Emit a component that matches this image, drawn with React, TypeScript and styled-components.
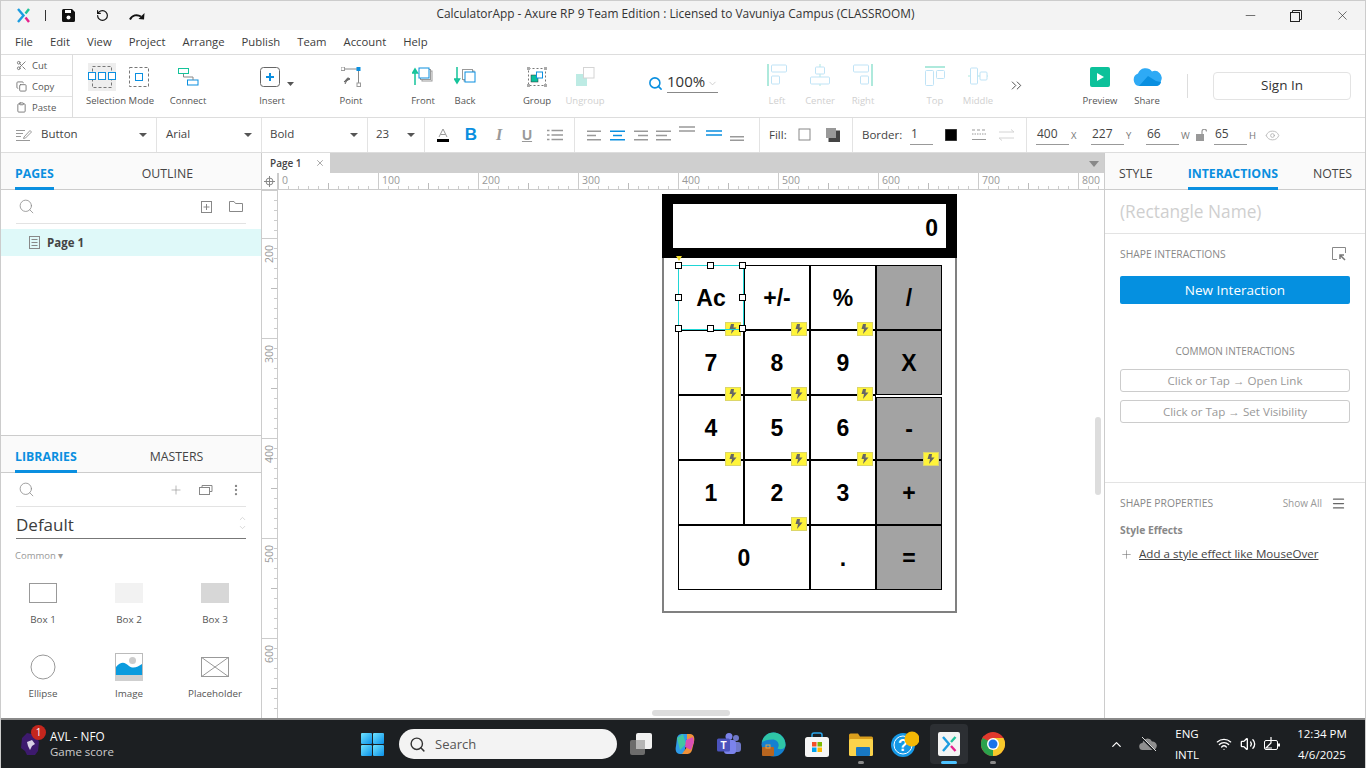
import React from "react";
import styled, { createGlobalStyle } from "styled-components";
import { Scissors, Copy, Clipboard, RotateCcw, Search, Plus, EllipsisVertical, ChevronDown, ChevronUp, ChevronsRight, Eye, Minus, X, Wifi, Volume2, ChevronUp as Up, Menu } from "lucide-react";

const FONT = `"Open Sans", "Liberation Sans", sans-serif`;
const Global = createGlobalStyle`
  html, body { margin: 0; padding: 0; background: #fff; }
  * { box-sizing: border-box; }
  body { font-family: ${FONT}; color: #333; }
`;

const Root = styled.div`
  width: 1366px; height: 768px; overflow: hidden; display: flex; flex-direction: column;
  border-left: 1px solid #ccc; border-right: 1px solid #ccc; border-top: 1px solid #ccc; background: #fff;
`;
/* ---------- title & menu ---------- */
const TitleBar = styled.div`
  height: 29px; flex: none; background: #f3f3f3; display: flex; align-items: center; position: relative; padding-left: 16px;
`;
const TitleText = styled.div`
  position: absolute; left: 0; right: 0; top: 5px; text-align: center; font-size: 11.9px; line-height: 15px; color: #333; padding-right: 15px;
`;
const QuickSlot = styled.div<{ $w: number }>`
  width: ${p => p.$w}px; flex: none; display: flex; justify-content: center; align-items: center;
`;
const WinBtns = styled.div`
  margin-left: auto; display: flex; padding-right: 0; color: #222; align-items: center;
`;
const MenuBar = styled.div`
  height: 25px; flex: none; display: flex; align-items: center; border-bottom: 1px solid #ddd; padding-left: 14px; gap: 17px;
`;
const MenuItem = styled.span`
  font-size: 11.3px; color: #3c3c3c; line-height: 24px;
`;
/* ---------- toolbar ---------- */
const Toolbar = styled.div`
  height: 63px; flex: none; display: flex; align-items: flex-start; border-bottom: 1px solid #ddd;
`;
const ClipCol = styled.div`
  width: 72px; height: 62px; flex: none; border-right: 1px solid #ddd; display: flex; flex-direction: column; margin-right: 7px;
`;
const ClipRow = styled.div`
  flex: 1; display: flex; align-items: center; gap: 5px; padding-left: 15px; font-size: 9.5px; color: #555;
  & + & { border-top: 1px solid #e3e3e3; }
`;
const Tool = styled.div<{ $w: number; $ml?: number }>`
  width: ${p => p.$w}px; margin-left: ${p => p.$ml ?? 0}px; flex: none; display: flex; flex-direction: column; align-items: center; padding-top: 8px;
`;
const ToolIcon = styled.div`
  height: 31px; display: flex; align-items: flex-start; justify-content: center; gap: 13px;
`;
const ToolLabel = styled.div<{ $off?: boolean }>`
  font-size: 9.5px; line-height: 14px; color: ${p => (p.$off ? "#d0d0d0" : "#555")}; white-space: nowrap;
`;
const HiBox = styled.div`
  background: #eee; width: 28px; height: 28px; margin-left: -4px; display: flex; align-items: center; justify-content: center;
`;
const ZoomWrap = styled.div`
  width: 80px; margin-left: 35px; display: flex; align-items: flex-start; padding-top: 18px; padding-left: 3px; flex: none;
`;
const ZoomVal = styled.div`
  width: 51px; margin-left: 4px; height: 20px; border-bottom: 1px solid #888; font-size: 15px; line-height: 16px; color: #333; display: flex; justify-content: space-between;
`;
const SepV = styled.div`
  width: 1px; height: 24px; background: #ddd; margin: 19px 0 0 16px; flex: none;
`;
const SignIn = styled.div`
  width: 138px; height: 28px; margin: 17px 0 0 25px; border: 1px solid #e3e3e3; border-radius: 4px; font-size: 13.5px; line-height: 24px; padding-bottom: 2px; color: #333; display: flex; align-items: center; justify-content: center; flex: none;
`;
/* ---------- format bar ---------- */
const FormatBar = styled.div`
  height: 35px; flex: none; display: flex; border-bottom: 1px solid #ddd;
`;
const FSection = styled.div<{ $w?: number; $pl?: number }>`
  ${p => (p.$w ? `width:${p.$w}px;flex:none;border-right:1px solid #e3e3e3;` : "flex:1;")}
  padding-left: ${p => p.$pl ?? 0}px; display: flex; align-items: center; position: relative;
`;
const FSelectText = styled.span<{ $ml?: number }>`
  font-size: 11.5px; color: #444; margin-left: ${p => p.$ml ?? 0}px; margin-top: -3px;
`;
const Caret = styled.span`
  position: absolute; right: 9px; top: 15px; width: 0; height: 0; border: 4px solid transparent; border-top: 4px solid #555; border-bottom: 0;
`;
const FSlot = styled.div<{ $w: number; $ml?: number }>`
  width: ${p => p.$w}px; margin-left: ${p => p.$ml ?? 0}px; flex: none; display: flex; justify-content: center; align-items: center;
`;
const FLabel = styled.span<{ $w: number }>`
  width: ${p => p.$w}px; flex: none; font-size: 11.5px; color: #444; margin-top: -1px;
`;
const NumInput = styled.div<{ $w?: number; $ml?: number }>`
  width: ${p => p.$w ?? 33}px; margin-left: ${p => p.$ml ?? 0}px; height: 19px; flex: none; border-bottom: 1px solid #999; font-size: 12px; line-height: 16px; color: #444; padding-left: 1px; margin-top: 1px;
`;
const Letter = styled.span<{ $w: number }>`
  width: ${p => p.$w}px; flex: none; font-size: 9.5px; padding-left: 2px; color: #777; margin-top: 1px;
`;
/* ---------- main ---------- */
const Main = styled.div`
  flex: 1; min-height: 0; display: flex;
`;
const SidePanel = styled.div<{ $right?: boolean }>`
  width: 261px; flex: none; display: flex; flex-direction: column;
  ${p => (p.$right ? "border-left:1px solid #ccc;" : "border-right:1px solid #ccc;")}
`;
const TabBar = styled.div<{ $gap: number }>`
  height: 37px; flex: none; display: flex; gap: ${p => p.$gap}px; padding-left: 14px; background: #fafafa; border-bottom: 1px solid #ccc;
`;
const Tab = styled.div<{ $on?: boolean }>`
  height: 37px; padding-top: 13px; font-size: 12.3px; line-height: 15px; white-space: nowrap;
  color: ${p => (p.$on ? "#0a8fe0" : "#444")}; font-weight: ${p => (p.$on ? 700 : 400)};
  border-bottom: 3px solid ${p => (p.$on ? "#0a8fe0" : "transparent")};
`;
const PagesPane = styled.div`
  flex: 1; min-height: 0;
`;
const SearchRow = styled.div`
  height: 34px; margin: 0 15px 0 15px; border-bottom: 1px solid #e3e3e3; display: flex; align-items: center; color: #888; padding-left: 2px;
`;
const SearchActions = styled.div`
  margin-left: auto; margin-right: -5px; display: flex; align-items: center;
`;
const ActionSlot = styled.div`
  width: 30px; display: flex; justify-content: center;
`;
const PageRow = styled.div`
  margin-top: 5px; height: 27px; background: #dff9f9; display: flex; align-items: center; padding-left: 28px; gap: 7px; font-size: 11.5px; font-weight: 700; color: #444;
`;
const LibPane = styled.div`
  height: 283px; flex: none; border-top: 1px solid #ccc;
`;
const DefaultSel = styled.div`
  margin: 0 15px; height: 32px; border-bottom: 1px solid #777; font-size: 17px; line-height: 35px; color: #3c3c3c; display: flex; justify-content: space-between;
`;
const Stack = styled.div`
  display: flex; flex-direction: column; justify-content: center; color: #ccc; margin-right: -1px;
`;
const CommonLabel = styled.div`
  margin: 10px 0 10px 14px; font-size: 9.5px; line-height: 14px; color: #999;
`;
const WidgetGrid = styled.div`
  display: grid; grid-template-columns: repeat(3, 86px); grid-auto-rows: 74px; margin-left: -1px;
`;
const Widget = styled.div`
  display: flex; flex-direction: column; align-items: center;
`;
const WidgetIcon = styled.div`
  height: 40px; display: flex; align-items: center; justify-content: center;
`;
const WidgetLabel = styled.div`
  font-size: 9.8px; line-height: 14px; color: #555;
`;
/* canvas */
const Center = styled.div`
  flex: 1; min-width: 0; display: flex; flex-direction: column;
`;
const DocTabs = styled.div`
  height: 20px; flex: none; background: #cfcfcf; padding-left: 0; display: flex; position: relative;
`;
const DocTab = styled.div`
  width: 68px; background: #fff; font-size: 10px; font-weight: 600; color: #444; padding-left: 8px; padding-bottom: 1px; display: flex; align-items: center; justify-content: space-between; padding-right: 5px;
`;
const DocCaret = styled.span`
  position: absolute; right: 5px; top: 8px; width: 0; height: 0; border: 5px solid transparent; border-top: 6px solid #888; border-bottom: 0;
`;
const RulerRow = styled.div`
  height: 17px; flex: none; display: flex; border-bottom: 1px solid #ccc; overflow: hidden;
`;
const RulerCorner = styled.div`
  width: 16px; flex: none; display: flex; align-items: center; justify-content: center; border-right: 1px solid #ccc; color: #888;
`;
const HCell = styled.div`
  width: 100px; flex: none; border-left: 1px solid #ccc; padding-left: 3px; padding-top: 1px; font-size: 10.5px; line-height: 13px; color: #999;
  background:
    repeating-linear-gradient(to right, #bbb 0 1px, transparent 1px 50px) 49px 100% / 100% 6px no-repeat,
    repeating-linear-gradient(to right, #ccc 0 1px, transparent 1px 10px) 9px 100% / 100% 3px no-repeat;
`;
const CanvasBody = styled.div`
  flex: 1; min-height: 0; display: flex;
`;
const VRuler = styled.div`
  width: 16px; flex: none; border-right: 1px solid #ccc; overflow: hidden; display: flex; flex-direction: column;
`;
const VCell = styled.div<{ $h?: number }>`
  height: ${p => p.$h ?? 100}px; flex: none; border-top: 1px solid #ccc; position: relative;
  background:
    repeating-linear-gradient(to bottom, #bbb 0 1px, transparent 1px 50px) 100% 49px / 6px 100% no-repeat,
    repeating-linear-gradient(to bottom, #ccc 0 1px, transparent 1px 10px) 100% 9px / 3px 100% no-repeat;
`;
const VText = styled.span`
  display: block; writing-mode: vertical-rl; transform: rotate(180deg); font-size: 10.5px; line-height: 12px; color: #999; padding-bottom: 3px; height: 24px; margin-left: 1px; text-align: left;
`;
const Surface = styled.div`
  flex: 1; position: relative; overflow: hidden; background: #fff;
`;
const Calc = styled.div`
  position: absolute; left: 384px; top: 4px; width: 295px; height: 419px; border: 2px solid #808080; background: #fff;
`;
const Display = styled.div`
  margin: -2px -2px 0; height: 64px; background: #000; padding: 10px 11px 10px 11px;
`;
const DisplayInner = styled.div`
  height: 44px; background: #fff; color: #000; font: 700 23px/48px "Liberation Sans", Arial, sans-serif; text-align: right; padding-right: 8px;
`;
const BtnGrid = styled.div`
  margin: 7px 0 0 14px; display: grid; grid-template-columns: repeat(4, 66px); grid-auto-rows: 65px;
`;
const CalcBtn = styled.div<{ $gray?: boolean; $span?: number; $top?: number }>`
  position: relative; border: 1px solid #000; display: flex; align-items: center; justify-content: center;
  font: 700 23px/26px "Liberation Sans", Arial, sans-serif; color: #000;
  ${p => (p.$gray ? "background:#a3a3a3;" : "")}
  ${p => (p.$span ? `grid-column: span ${p.$span};` : "")}
  ${p => (p.$top ? `margin-top:${p.$top}px;` : "")}
`;
const Badge = styled.span`
  position: absolute; right: 2px; bottom: -7px; width: 16px; height: 14px; background: #fff43a; border: 1px solid #dcd66a; z-index: 2; display: flex; align-items: center; justify-content: center;
`;
const Selection = styled.div`
  position: absolute; left: -1px; top: -1px; width: 66px; height: 65px; border: 1px solid #1fd6d6; z-index: 3;
`;
const Handle = styled.span<{ $x: number; $y: number }>`
  position: absolute; width: 7px; height: 7px; background: #fff; border: 1px solid #000; left: calc(${p => p.$x}% - 4px); top: calc(${p => p.$y}% - 4px);
`;
const Marker = styled.span`
  position: absolute; left: -3px; top: -10px; width: 0; height: 0; border: 3px solid transparent; border-top: 5px solid #f3dd2c; border-bottom: 0;
`;
const VScroll = styled.div`
  position: absolute; right: 3px; top: 227px; width: 6px; height: 78px; background: #ddd; border-radius: 3px;
`;
const HScroll = styled.div`
  position: absolute; left: 374px; bottom: 2px; width: 78px; height: 6px; background: #ddd; border-radius: 3px;
`;
/* right panel */
const NameField = styled.div`
  height: 44px; border-bottom: 1px solid #e3e3e3; padding: 10px 0 0 15px; font-size: 17.3px; line-height: 24px; color: #cfcfcf;
`;
const SecHead = styled.div`
  display: flex; justify-content: space-between; align-items: center; padding: 0 19px 0 15px; height: 14px; font-size: 10.3px; line-height: 14px; color: #888; margin-top: 13px;
`;
const PrimaryBtn = styled.div`
  margin: 15px 15px 0; height: 28px; background: #0590e0; border-radius: 2px; color: #fff; font-size: 13.5px; display: flex; align-items: center; justify-content: center;
`;
const CommonHead = styled.div`
  margin-top: 40px; margin-bottom: 11px; text-align: center; font-size: 10px; line-height: 14px; color: #888;
`;
const OutlineBtn = styled.div`
  margin: 0 15px 8px; height: 23px; border: 1px solid #ccc; border-radius: 3px; color: #999; font-size: 11.6px; display: flex; align-items: center; justify-content: center;
`;
const RightSection = styled.div`
  margin-top: 51px; border-top: 1px solid #e3e3e3;
`;
const ShowAll = styled.span`
  display: flex; align-items: center; gap: 9px; font-size: 10px; color: #999;
`;
const SmallBold = styled.div`
  margin: 13px 0 0 15px; font-size: 10.3px; line-height: 14px; font-weight: 700; color: #888;
`;
const AddEffect = styled.div`
  margin: 9px 0 0 15px; display: flex; align-items: center; gap: 6px; font-size: 11.6px; line-height: 16px; color: #444;
  & > span { text-decoration: underline; }
`;
/* taskbar */
const BottomRule = styled.div`
  height: 2px; flex: none; background: #8a8a8a; margin-left: -1px; margin-right: -1px;
`;
const Taskbar = styled.div`
  height: 48px; flex: none; background: #1c1f22; display: flex; align-items: center; margin-left: -1px; margin-right: -1px; padding-left: 20px; color: #fff; position: relative;
`;
const News = styled.div`
  width: 330px; flex: none; display: flex; align-items: center; gap: 10px; position: relative;
`;
const NewsBadge = styled.span`
  position: absolute; left: 11px; top: -3px; width: 15px; height: 15px; border-radius: 50%; background: #c4261d; font-size: 10px; line-height: 15px; text-align: center; color: #fff;
`;
const NewsText = styled.div`
  font-size: 11.8px; line-height: 16px; color: #fff;
  & > small { display: block; font-size: 11.5px; color: #ccc; }
`;
const TaskSlot = styled.div<{ $on?: boolean }>`
  width: 44px; height: 48px; flex: none; display: flex; align-items: center; justify-content: center; position: relative;
  ${p => (p.$on ? "&::before{content:'';position:absolute;left:3px;right:3px;top:4px;bottom:4px;background:#2c2f33;border-radius:4px;}" : "")}
  & > svg { position: relative; }
`;
const RunDot = styled.span<{ $on?: boolean }>`
  position: absolute; bottom: 4px; left: 50%; transform: translateX(-50%); height: 3px; border-radius: 2px;
  width: ${p => (p.$on ? 16 : 6)}px; background: ${p => (p.$on ? "#4cc2ff" : "#8a8a8a")};
`;
const SearchPill = styled.div`
  width: 218px; height: 30px; margin: 0 2px 0 5px; flex: none; background: #f3f3f3; border-radius: 15px; display: flex; align-items: center; gap: 9px; padding-left: 10px; color: #555; font-size: 13px;
`;
const Tray = styled.div`
  margin-left: auto; display: flex; align-items: center; padding-right: 19px;
`;
const TraySlot = styled.div<{ $w: number; $ml?: number }>`
  width: ${p => p.$w}px; margin-left: ${p => p.$ml ?? 0}px; flex: none; display: flex; justify-content: center; align-items: center;
`;
const TrayText = styled.div`
  font-size: 11.5px; line-height: 21px; text-align: center; color: #fff; white-space: nowrap;
`;

/* ---------- drawings ---------- */
const AxureLogo = () => (
  <svg width="13" height="15" viewBox="0 0 13 15" fill="none" strokeWidth="2.4">
    <path d="M1 1 L6.500 7.500 L1 14" stroke="#1c9ce0" />
    <path d="M12 1 L8.500 5.500" stroke="#1fc39a" />
    <path d="M8.500 9.500 L12 14" stroke="#e6218c" />
  </svg>
);
const SaveIcon = () => (
  <svg width="13" height="13" viewBox="0 0 13 13"><path d="M0 1.500A1.500 1.500 0 0 1 1.500 0H10l3 3v8.500a1.500 1.500 0 0 1-1.500 1.500h-10A1.500 1.500 0 0 1 0 11.500Z" fill="#111" /><rect x="3" y="1" width="6" height="3" fill="#fff" /><circle cx="6.500" cy="8.500" r="2" fill="#fff" /></svg>
);
const RedoIcon = () => (
  <svg width="16" height="10" viewBox="0 0 16 10" fill="none"><path d="M1 8.500C3 4 8 3 12 5.500" stroke="#111" strokeWidth="2" /><path d="M15.500 2 15 8.500 9.500 8Z" fill="#111" /></svg>
);
const SelGroup = () => (
  <svg width="28" height="22" viewBox="0 0 28 22" fill="none"><rect x="4.500" y="0.500" width="19" height="21" stroke="#777" strokeDasharray="3 2" /><g stroke="#0a8fe0" fill="#fff"><rect x="0.500" y="6.500" width="7" height="7" /><rect x="10.500" y="6.500" width="7" height="7" /><rect x="20.500" y="6.500" width="7" height="7" /></g></svg>
);
const SelIntersect = () => (
  <svg width="20" height="20" viewBox="0 0 20 20" fill="none" style={{ marginTop: 4 }}><rect x="0.500" y="0.500" width="19" height="19" stroke="#777" strokeDasharray="3 2" /><rect x="6.500" y="6.500" width="7" height="7" stroke="#0a8fe0" /></svg>
);
const ConnectIcon = () => (
  <svg width="21" height="18" viewBox="0 0 21 18" fill="none" style={{ marginTop: 5 }}><rect x="0.500" y="0.500" width="10" height="5" stroke="#14c39a" /><rect x="9.500" y="12" width="10.500" height="5" stroke="#0a8fe0" /><path d="M5.500 6V9H15V12" stroke="#888" /></svg>
);
const InsertIcon = () => (
  <svg width="36" height="24" viewBox="0 0 36 24" fill="none" style={{ marginTop: 4, marginLeft: 12 }}><rect x="0.500" y="0.500" width="19" height="19" rx="3" stroke="#666" /><path d="M10 6v8M6 10h8" stroke="#0a8fe0" strokeWidth="2" /><path d="M27 15h7l-3.500 4Z" fill="#555" /></svg>
);
const PointIcon = () => (
  <svg width="20" height="20" viewBox="0 0 20 20" fill="none" style={{ marginTop: 4 }}><path d="M2 2H17.500V18" stroke="#888" /><rect x="0" y="0" width="3.500" height="3.500" fill="#fff" stroke="#999" /><rect x="15.500" y="0" width="4" height="4" fill="#0a8fe0" /><rect x="16" y="16" width="3.500" height="3.500" fill="#fff" stroke="#999" /><path d="M3 15l6-3-2.200-1.200ZM6 13l-2 4" fill="#666" stroke="#666" /></svg>
);
const OrderIcon = ({ up }: { up: boolean }) => (
  <svg width="22" height="18" viewBox="0 0 22 18" fill="none" style={{ marginTop: 4 }}>
    <path d={up ? "M3 18V3M0.500 6L3 2l2.500 4Z" : "M3 0V15M0.500 12L3 16l2.500-4Z"} stroke="#14c39a" strokeWidth="1.500" />
    <rect x="10" y="4" width="10" height="10" fill="#fff" stroke="#999" />
    <rect x="8.500" y="2.500" width="10" height="10" fill="#fff" stroke="#999" />
    <rect x={up ? 7 : 11} y={up ? 1 : 5} width="10" height="10" fill="#fff" stroke="#0a8fe0" />
  </svg>
);
const GroupIcon = () => (
  <svg width="20" height="20" viewBox="0 0 20 20" fill="none" style={{ marginTop: 4 }}><rect x="1.500" y="1.500" width="17" height="17" stroke="#777" strokeDasharray="2 2" /><g fill="#aaa"><rect width="3" height="3" /><rect x="17" width="3" height="3" /><rect y="17" width="3" height="3" /><rect x="17" y="17" width="3" height="3" /></g><rect x="4" y="8" width="7" height="7" fill="#0abf9c" stroke="#333" strokeWidth=".5" /><rect x="9.500" y="5" width="6" height="6" fill="#fff" stroke="#0a8fe0" /></svg>
);
const UngroupIcon = () => (
  <svg width="20" height="20" viewBox="0 0 20 20" fill="none" style={{ marginTop: 4 }}><rect x="1" y="7" width="11" height="12" fill="#bdebe4" /><rect x="8.500" y="0.500" width="10.500" height="10.500" fill="#fff" stroke="#d4d4d4" /></svg>
);
const AlignIcon = ({ kind }: { kind: "left" | "center" | "right" | "top" | "middle" }) => {
  const a = "#aee9dc", b = "#bfe3f6";
  const sty = { marginTop: 1 };
  if (kind === "left") return <svg width="20" height="22" viewBox="0 0 20 22" fill="none" style={sty}><path d="M1 0V22" stroke={a} strokeWidth="2" /><rect x="4.500" y="1" width="15" height="7" rx="1" stroke={b} /><rect x="4.500" y="12" width="8" height="8" rx="1" stroke={b} /></svg>;
  if (kind === "center") return <svg width="20" height="22" viewBox="0 0 20 22" fill="none" style={sty}><path d="M10 0V22" stroke={a} /><rect x="5.500" y="3" width="9" height="7" rx="1" fill="#fff" stroke={b} /><rect x="0.500" y="13" width="19" height="7" rx="1" fill="#fff" stroke={b} /></svg>;
  if (kind === "right") return <svg width="20" height="22" viewBox="0 0 20 22" fill="none" style={sty}><path d="M19 0V22" stroke={a} strokeWidth="2" /><rect x="0.500" y="1" width="15" height="7" rx="1" stroke={b} /><rect x="7.500" y="12" width="8" height="8" rx="1" stroke={b} /></svg>;
  if (kind === "top") return <svg width="20" height="20" viewBox="0 0 20 20" fill="none" style={{ marginTop: 3 }}><path d="M0 1H20" stroke={a} strokeWidth="2" /><rect x="0.500" y="4.500" width="8" height="15" rx="1" stroke={b} /><rect x="11.500" y="4.500" width="8" height="8" rx="1" stroke={b} /></svg>;
  return <svg width="20" height="20" viewBox="0 0 20 20" fill="none" style={{ marginTop: 3 }}><path d="M0 10H20" stroke={a} /><rect x="2.500" y="2" width="7" height="16" rx="1" fill="#fff" stroke={b} /><rect x="12" y="6" width="7" height="8" rx="1" fill="#fff" stroke={b} /></svg>;
};
const PreviewIcon = () => (
  <svg width="20" height="20" viewBox="0 0 20 20" style={{ marginTop: 4 }}><rect width="20" height="20" rx="2" fill="#0cc19a" /><path d="M7 6l7 4-7 4Z" fill="#fff" /></svg>
);
const ShareIcon = () => (
  <svg width="30" height="20" viewBox="0 0 30 20" style={{ marginTop: 4 }}><path d="M7 19A6.500 6.500 0 0 1 6 6.500 8 8 0 0 1 20 4.500 7 7 0 0 1 29 14 5.500 5.500 0 0 1 24 19Z" fill="#2eaaf5" /><path d="M7 19 16 9l8 5 5 1a5.500 5.500 0 0 1-5 4Z" fill="#0a8fe0" /></svg>
);
const FieldIcon = () => (
  <svg width="16" height="14" viewBox="0 0 16 14" fill="none" stroke="#999"><path d="M0 2.500H9M0 5.500H7M0 8.500H5M0 12.500H14" /><path d="M8 9 14 2.500l1.500 1.500-6 6-2 .5Z" /></svg>
);
const FontColor = () => (
  <svg width="14" height="14" viewBox="0 0 14 14" fill="none"><path d="M3 9 7 1l4 8M4.500 6.500H9.500" stroke="#999" /><rect x="1" y="11" width="12" height="3" fill="#000" /></svg>
);
const Glyph = styled.span<{ $c: string; $i?: boolean; $u?: boolean }>`
  font: ${p => (p.$i ? `italic 700 16px/16px "Liberation Serif", serif` : `700 17px/16px "Liberation Sans", sans-serif`)}; color: ${p => p.$c};
  ${p => (p.$u ? "text-decoration: underline; font-size: 14px;" : "")}
`;
const ListIcon = () => (
  <svg width="16" height="12" viewBox="0 0 16 12" fill="none" stroke="#999" strokeWidth="1.500"><path d="M4.500 1.500H16M4.500 6H16M4.500 10.500H16M0 1.500h2.500M0 6h2.500M0 10.500h2.500" /></svg>
);
const HAlign = ({ w, c = "#999" }: { w: [number, number, number, number]; c?: string }) => (
  <svg width="15" height="11" viewBox="0 0 15 11" fill="none" stroke={c} strokeWidth="1.500">
    <path d={`M${w[0]} 1.200H${w[1]}M${w[2]} 5.500H${w[3]}M${w[0]} 9.800H${w[1]}`} />
  </svg>
);
const VAlign = ({ y, c = "#999" }: { y: number; c?: string }) => (
  <svg width="16" height="22" viewBox="0 0 16 22" fill="none" stroke={c} strokeWidth="1.500"><path d={`M0 ${y}H16M0 ${y + 4}H16`} /></svg>
);
const FillBox = () => <svg width="14" height="14" viewBox="0 0 14 14" fill="none"><rect x="1" y="1" width="11" height="11" stroke="#888" /></svg>;
const ShadowBox = () => <svg width="14" height="14" viewBox="0 0 14 14"><rect x="2.500" y="2.500" width="11.500" height="11.500" fill="#444" /><rect x="0" y="0" width="10" height="10" fill="#999" /></svg>;
const BlackBox = () => <svg width="12" height="12" viewBox="0 0 12 12"><rect width="12" height="12" fill="#000" stroke="#666" /></svg>;
const DashIcon = () => <svg width="16" height="12" viewBox="0 0 16 12" fill="none" stroke="#999"><path d="M1 1h14" strokeDasharray="3 2" /><path d="M1 5h14" strokeDasharray="1.500 1" /><path d="M1 10.500h14" /></svg>;
const ArrowsIcon = () => <svg width="16" height="12" viewBox="0 0 16 12" fill="none" stroke="#d4d4d4"><path d="M0 3H15M12 .5 15 3M0 9H15M3 11.500 0 9" /></svg>;
const LockIcon = () => <svg width="11" height="12" viewBox="0 0 11 12" fill="none"><rect y="5" width="8" height="7" fill="#999" /><path d="M6 5V2.500a2.200 2.200 0 0 1 4.500 0" stroke="#999" strokeWidth="1.200" /></svg>;
const PageIcon = () => <svg width="11" height="13" viewBox="0 0 11 13" fill="none" stroke="#888"><rect x=".5" y=".5" width="10" height="12" /><path d="M2.500 3.500h6M2.500 6.500h6M2.500 9.500h6" /></svg>;
const AddPageIcon = () => <svg width="11" height="12" viewBox="0 0 11 12" fill="none" stroke="#888"><rect x=".5" y=".5" width="10" height="11" /><path d="M5.500 3v6M2.500 6h6" /></svg>;
const FolderIcon = () => <svg width="14" height="11" viewBox="0 0 14 11" fill="none" stroke="#888"><path d="M.5 10.500V.5H5L6.500 2.500H13.500V10.500Z" /></svg>;
const CopiesIcon = () => <svg width="14" height="11" viewBox="0 0 14 11" fill="none" stroke="#888"><rect x=".5" y="3.500" width="10" height="7" /><path d="M3 3.500V1.500H13V7.500H10.500" /></svg>;
const CrossHair = () => <svg width="11" height="11" viewBox="0 0 11 11" fill="none" stroke="#888"><circle cx="5.500" cy="5.500" r="3.500" /><path d="M5.500 0v11M0 5.500h11" /></svg>;
const Bolt = () => <svg width="8" height="10" viewBox="0 0 8 10"><path d="M5 0H2L.5 5H3L2 10 7.500 3.500H4.500Z" fill="#666" /></svg>;
const Box1 = () => <svg width="28" height="20"><rect x=".5" y=".5" width="27" height="19" fill="#fff" stroke="#999" /></svg>;
const Box2 = () => <svg width="28" height="20"><rect width="28" height="20" fill="#f2f2f2" /></svg>;
const Box3 = () => <svg width="28" height="20"><rect width="28" height="20" fill="#d7d7d7" /></svg>;
const EllipseI = () => <svg width="26" height="26" fill="none"><circle cx="13" cy="13" r="12" stroke="#999" /></svg>;
const ImageI = () => (
  <svg width="28" height="28" viewBox="0 0 28 28" fill="none"><rect x=".5" y=".5" width="27" height="27" stroke="#bbb" /><rect y="22" width="28" height="6" fill="#cfcfcf" /><path d="M1 22V14C6 8 10 9 14 13 18 16 23 14 27 11V22Z" fill="#0a9bde" /><circle cx="17.500" cy="7.500" r="3.500" fill="#ccc" /></svg>
);
const PlaceI = () => <svg width="28" height="20" fill="none" stroke="#999"><rect x=".5" y=".5" width="27" height="19" /><path d="M0 0 28 20M28 0 0 20" /></svg>;
const TargetIcon = () => <svg width="14" height="14" viewBox="0 0 14 14" fill="none" stroke="#888"><path d="M5 12.500H.5V.5H13.500V6" /><path d="M13 13 8 8M8 12V8H12" strokeWidth="1.500" stroke="#777" /></svg>;
/* taskbar art */
const LionIcon = () => <svg width="20" height="24" viewBox="0 0 20 24"><path d="M2 6 7 1l9 2 3 7-1 9-3 4H7l-2-4-4-3Z" fill="#3d1a6e" /><path d="M7 10l5-2 3 4-3 2-2 4-2-4Z" fill="#d9d2e6" /></svg>;
const WinLogo = () => <svg width="23" height="23" viewBox="0 0 23 23"><defs><linearGradient id="w" x1="0" y1="0" x2="1" y2="1"><stop offset="0" stopColor="#6fe3ff" /><stop offset="1" stopColor="#0a8fe8" /></linearGradient></defs><g fill="url(#w)"><rect width="11" height="11" rx="1" /><rect x="12" width="11" height="11" rx="1" /><rect y="12" width="11" height="11" rx="1" /><rect x="12" y="12" width="11" height="11" rx="1" /></g></svg>;
const TaskView = () => <svg width="24" height="24" viewBox="0 0 24 24"><rect x="1" y="8" width="15" height="15" rx="2" fill="#6c6c6c" /><rect x="7" y="1" width="16" height="16" rx="2" fill="#f1f1f1" /><rect x="7" y="8" width="9" height="9" fill="#b5b5b5" /></svg>;
const CopilotI = () => <svg width="24" height="24" viewBox="0 0 24 24"><path d="M4 6C5 2 8 2 10 2h5l-4 20H7C3 22 2 18 3 14Z" fill="#2f9be8" /><path d="M4 6 10 2l3 10-6 6Z" fill="#43c6a0" /><path d="M14 2h3c4 0 5 4 4 8l-2 8c-1 4-4 4-6 4H9l5-7Z" fill="#f0923a" /><path d="M13 8l7-3 1 5-3 8-6-3Z" fill="#d94fb5" /></svg>;
const TeamsI = () => <svg width="24" height="24" viewBox="0 0 24 24"><circle cx="19" cy="6" r="3" fill="#6f78c8" /><rect x="15" y="10" width="9" height="10" rx="3" fill="#6f78c8" /><circle cx="12" cy="4.500" r="3.500" fill="#7b83eb" /><rect x="7" y="8" width="12" height="14" rx="3" fill="#7b83eb" /><rect x="0" y="6.500" width="13" height="13" rx="1.500" fill="#4b53bc" /><text x="6.500" y="16.500" fontSize="10" fontWeight="700" fill="#fff" textAnchor="middle" fontFamily="Liberation Sans">T</text></svg>;
const EdgeI = () => <svg width="25" height="25" viewBox="0 0 25 25"><circle cx="12.500" cy="12.500" r="12" fill="#1580cf" /><path d="M.8 11C2 4 7 .5 12.500 .5 19 .5 24.500 6 24.500 13c0 4-5 5-8 3.500 3-4 0-9-5-9-5 0-9 1-10.700 3.500Z" fill="#2fc5a6" /><rect x="1" y="15" width="12" height="9" rx="1" fill="#b8651f" /><rect x="5" y="13" width="4" height="3" fill="none" stroke="#e2a24a" /></svg>;
const StoreI = () => <svg width="24" height="25" viewBox="0 0 24 25" fill="none"><path d="M7 6V3a2 2 0 0 1 2-2h6a2 2 0 0 1 2 2v3" stroke="#2ba6ea" strokeWidth="1.500" /><rect y="5" width="24" height="20" rx="2.500" fill="#f6f6f6" /><rect x="7" y="10" width="4.500" height="4.500" fill="#f2502a" /><rect x="12.500" y="10" width="4.500" height="4.500" fill="#7db900" /><rect x="7" y="15.500" width="4.500" height="4.500" fill="#00a4ef" /><rect x="12.500" y="15.500" width="4.500" height="4.500" fill="#ffb900" /></svg>;
const ExplorerI = () => <svg width="24" height="23" viewBox="0 0 24 23"><path d="M0 2a1.500 1.500 0 0 1 1.500-1.500H9l2 3h11.500A1.500 1.500 0 0 1 24 5v3H0Z" fill="#d99e1c" /><rect y="6" width="24" height="17" rx="1.500" fill="#fbd34b" /><rect x="7" y="14" width="14" height="9" rx="1" fill="#1878c4" /></svg>;
const HelpI = () => <svg width="28" height="26" viewBox="0 0 28 26"><circle cx="12" cy="14" r="12" fill="#1598e6" /><circle cx="12" cy="14" r="9" fill="none" stroke="#fff" strokeWidth="1" /><text x="12" y="20" fontSize="16" fontWeight="700" fill="#fff" textAnchor="middle" fontFamily="Liberation Sans">?</text><circle cx="21" cy="8" r="7.500" fill="#f3b705" /></svg>;
const ChromeI = () => <svg width="24" height="24" viewBox="0 0 24 24"><circle cx="12" cy="12" r="12" fill="#e0392d" /><path d="M12 12 1.600 18A12 12 0 0 1 3 3.500Z" fill="#e0392d" /><path d="M1.600 6A12 12 0 0 0 12 24l6-10Z" fill="#2ba24c" /><path d="M12 24A12 12 0 0 0 22.400 6H12Z" fill="#f8c92b" /><circle cx="12" cy="12" r="6" fill="#fff" /><circle cx="12" cy="12" r="4.500" fill="#1a73e8" /></svg>;
const CloudOff = () => <svg width="18" height="16" viewBox="0 0 18 16"><path d="M4 14A3.500 3.500 0 0 1 3.500 7 5 5 0 0 1 13 5.500 4 4 0 0 1 14 14Z" fill="#8f8f8f" /><path d="M2 1 16 15" stroke="#1c1f22" strokeWidth="2" /><path d="M3 1 17 15" stroke="#ddd" /></svg>;
const BatteryI = () => <svg width="17" height="15" viewBox="0 0 17 15" fill="none" stroke="#fff"><rect x=".5" y="3.500" width="13" height="9" rx="1.500" /><path d="M15 6.500v3" strokeWidth="2" /><path d="M7 0v6L2 11h6" strokeWidth="1.200" /></svg>;

const ruler = [0, 100, 200, 300, 400, 500, 600, 700, 800];
const vruler = [200, 300, 400, 500, 600];
type CB = { t: string; gray?: boolean; span?: number; badge?: boolean; top?: number; sel?: boolean };
const buttons: CB[] = [
  { t: "Ac", badge: true, sel: true }, { t: "+/-", badge: true }, { t: "%", badge: true }, { t: "/", gray: true },
  { t: "7", badge: true }, { t: "8", badge: true }, { t: "9", badge: true }, { t: "X", gray: true },
  { t: "4", badge: true }, { t: "5", badge: true }, { t: "6", badge: true }, { t: "-", gray: true, badge: true, top: 2 },
  { t: "1" }, { t: "2", badge: true }, { t: "3" }, { t: "+", gray: true },
  { t: "0", span: 2 }, { t: "." }, { t: "=", gray: true },
];
const handles: [number, number][] = [[0, 0], [50, 0], [100, 0], [0, 50], [100, 50], [0, 100], [50, 100], [100, 100]];
const menus = ["File", "Edit", "View", "Project", "Arrange", "Publish", "Team", "Account", "Help"];
const widgets: [string, React.ReactNode][] = [
  ["Box 1", <Box1 />], ["Box 2", <Box2 />], ["Box 3", <Box3 />],
  ["Ellipse", <EllipseI />], ["Image", <ImageI />], ["Placeholder", <PlaceI />],
];

export default function App() {
  return (
    <Root>
      <Global />
      <TitleBar>
        <AxureLogo />
        <QuickSlot $w={30}><svg width="1" height="11"><rect width="1" height="11" fill="#333" /></svg></QuickSlot>
        <QuickSlot $w={16}><SaveIcon /></QuickSlot>
        <QuickSlot $w={52}><RotateCcw size={13} strokeWidth={2.2} color="#111" /></QuickSlot>
        <QuickSlot $w={18}><RedoIcon /></QuickSlot>
        <TitleText>CalculatorApp - Axure RP 9 Team Edition : Licensed to Vavuniya Campus (CLASSROOM)</TitleText>
        <WinBtns>
          <QuickSlot $w={46}><Minus size={15} strokeWidth={1} /></QuickSlot>
          <QuickSlot $w={46}>
            <svg width="12" height="12" viewBox="0 0 12 12" fill="none" stroke="#222"><rect x=".5" y="2.500" width="9" height="9" /><path d="M2.500 2.500V.5H11.500V9.500H9.500" /></svg>
          </QuickSlot>
          <QuickSlot $w={46}><X size={15} strokeWidth={1} /></QuickSlot>
        </WinBtns>
      </TitleBar>
      <MenuBar>
        {menus.map(m => <MenuItem key={m}>{m}</MenuItem>)}
      </MenuBar>
      <Toolbar>
        <ClipCol>
          <ClipRow><Scissors size={11} color="#777" />Cut</ClipRow>
          <ClipRow><Copy size={11} color="#777" />Copy</ClipRow>
          <ClipRow><Clipboard size={11} color="#777" />Paste</ClipRow>
        </ClipCol>
        <Tool $w={80}><ToolIcon><HiBox><SelGroup /></HiBox><SelIntersect /></ToolIcon><ToolLabel>Selection Mode</ToolLabel></Tool>
        <Tool $w={56}><ToolIcon><ConnectIcon /></ToolIcon><ToolLabel>Connect</ToolLabel></Tool>
        <Tool $w={112}><ToolIcon><InsertIcon /></ToolIcon><ToolLabel>Insert</ToolLabel></Tool>
        <Tool $w={46}><ToolIcon><PointIcon /></ToolIcon><ToolLabel>Point</ToolLabel></Tool>
        <Tool $w={42} $ml={28}><ToolIcon><OrderIcon up /></ToolIcon><ToolLabel>Front</ToolLabel></Tool>
        <Tool $w={42}><ToolIcon><OrderIcon up={false} /></ToolIcon><ToolLabel>Back</ToolLabel></Tool>
        <Tool $w={46} $ml={28}><ToolIcon><GroupIcon /></ToolIcon><ToolLabel>Group</ToolLabel></Tool>
        <Tool $w={50}><ToolIcon><UngroupIcon /></ToolIcon><ToolLabel $off>Ungroup</ToolLabel></Tool>
        <ZoomWrap>
          <Search size={15} color="#0a8fe0" strokeWidth={2.5} style={{ marginTop: 3, flex: "none" }} />
          <ZoomVal>100%<ChevronDown size={11} color="#ccc" style={{ marginTop: 5 }} /></ZoomVal>
        </ZoomWrap>
        <Tool $w={42} $ml={31}><ToolIcon><AlignIcon kind="left" /></ToolIcon><ToolLabel $off>Left</ToolLabel></Tool>
        <Tool $w={44}><ToolIcon><AlignIcon kind="center" /></ToolIcon><ToolLabel $off>Center</ToolLabel></Tool>
        <Tool $w={42}><ToolIcon><AlignIcon kind="right" /></ToolIcon><ToolLabel $off>Right</ToolLabel></Tool>
        <Tool $w={42} $ml={30}><ToolIcon><AlignIcon kind="top" /></ToolIcon><ToolLabel $off>Top</ToolLabel></Tool>
        <Tool $w={44}><ToolIcon><AlignIcon kind="middle" /></ToolIcon><ToolLabel $off>Middle</ToolLabel></Tool>
        <Tool $w={32}><ToolIcon><ChevronsRight size={17} strokeWidth={1.2} color="#333" style={{ marginTop: 14 }} /></ToolIcon></Tool>
        <Tool $w={46} $ml={45}><ToolIcon><PreviewIcon /></ToolIcon><ToolLabel>Preview</ToolLabel></Tool>
        <Tool $w={48}><ToolIcon><ShareIcon /></ToolIcon><ToolLabel>Share</ToolLabel></Tool>
        <SepV />
        <SignIn>Sign In</SignIn>
      </Toolbar>
      <FormatBar>
        <FSection $w={156} $pl={15}><FieldIcon /><FSelectText $ml={9}>Button</FSelectText><Caret /></FSection>
        <FSection $w={105} $pl={9}><FSelectText>Arial</FSelectText><Caret /></FSection>
        <FSection $w={106} $pl={8}><FSelectText>Bold</FSelectText><Caret /></FSection>
        <FSection $w={57} $pl={8}><FSelectText>23</FSelectText><Caret /></FSection>
        <FSection $w={150} $pl={4}>
          <FSlot $w={28}><FontColor /></FSlot>
          <FSlot $w={28}><Glyph $c="#0a8fe0">B</Glyph></FSlot>
          <FSlot $w={28}><Glyph $c="#999" $i>I</Glyph></FSlot>
          <FSlot $w={28}><Glyph $c="#999" $u>U</Glyph></FSlot>
          <FSlot $w={28}><ListIcon /></FSlot>
        </FSection>
        <FSection $w={185} $pl={8}>
          <FSlot $w={23}><HAlign w={[0, 14, 0, 9]} /></FSlot>
          <FSlot $w={23}><HAlign w={[0, 15, 3, 12]} c="#0a8fe0" /></FSlot>
          <FSlot $w={23}><HAlign w={[1, 15, 5, 15]} /></FSlot>
          <FSlot $w={23}><HAlign w={[0, 15, 0, 11]} /></FSlot>
          <FSlot $w={23}><VAlign y={3} /></FSlot>
          <FSlot $w={32}><VAlign y={7} c="#0a8fe0" /></FSlot>
          <FSlot $w={14}><VAlign y={13} /></FSlot>
        </FSection>
        <FSection $w={93} $pl={9}>
          <FLabel $w={28}>Fill:</FLabel>
          <FSlot $w={16}><FillBox /></FSlot>
          <FSlot $w={16} $ml={12}><ShadowBox /></FSlot>
        </FSection>
        <FSection $w={174} $pl={9}>
          <FLabel $w={44}>Border:</FLabel>
          <NumInput $w={23} $ml={4}>1</NumInput>
          <FSlot $w={28} $ml={4}><BlackBox /></FSlot>
          <FSlot $w={28}><DashIcon /></FSlot>
          <FSlot $w={28}><ArrowsIcon /></FSlot>
        </FSection>
        <FSection $pl={9}>
          <NumInput>400</NumInput><Letter $w={22}>X</Letter>
          <NumInput>227</NumInput><Letter $w={22}>Y</Letter>
          <NumInput>66</NumInput><Letter $w={16}>W</Letter>
          <FSlot $w={12}><LockIcon /></FSlot>
          <NumInput $ml={7}>65</NumInput><Letter $w={16}>H</Letter>
          <FSlot $w={18}><Eye size={15} color="#aaa" strokeWidth={1.2} /></FSlot>
        </FSection>
      </FormatBar>
      <Main>
        <SidePanel>
          <PagesPane>
            <TabBar $gap={88}><Tab $on>PAGES</Tab><Tab>OUTLINE</Tab></TabBar>
            <SearchRow>
              <Search size={17} strokeWidth={1.1} />
              <SearchActions>
                <ActionSlot><AddPageIcon /></ActionSlot>
                <ActionSlot><FolderIcon /></ActionSlot>
              </SearchActions>
            </SearchRow>
            <PageRow><PageIcon />Page 1</PageRow>
          </PagesPane>
          <LibPane>
            <TabBar $gap={73}><Tab $on>LIBRARIES</Tab><Tab>MASTERS</Tab></TabBar>
            <SearchRow>
              <Search size={17} strokeWidth={1.1} />
              <SearchActions>
                <ActionSlot><Plus size={14} strokeWidth={1} /></ActionSlot>
                <ActionSlot><CopiesIcon /></ActionSlot>
                <ActionSlot><EllipsisVertical size={14} strokeWidth={2} /></ActionSlot>
              </SearchActions>
            </SearchRow>
            <DefaultSel>Default<Stack><ChevronUp size={9} /><ChevronDown size={9} /></Stack></DefaultSel>
            <CommonLabel>Common ▾</CommonLabel>
            <WidgetGrid>
              {widgets.map(([n, i]) => (
                <Widget key={n}><WidgetIcon>{i}</WidgetIcon><WidgetLabel>{n}</WidgetLabel></Widget>
              ))}
            </WidgetGrid>
          </LibPane>
        </SidePanel>
        <Center>
          <DocTabs>
            <DocTab>Page 1<X size={10} color="#999" /></DocTab>
            <DocCaret />
          </DocTabs>
          <RulerRow>
            <RulerCorner><CrossHair /></RulerCorner>
            {ruler.map(n => <HCell key={n}>{n}</HCell>)}
          </RulerRow>
          <CanvasBody>
            <VRuler>
              <VCell $h={48} />
              {vruler.map(n => <VCell key={n}><VText>{n}</VText></VCell>)}
            </VRuler>
            <Surface>
              <Calc>
                <Display><DisplayInner>0</DisplayInner></Display>
                <BtnGrid>
                  {buttons.map((b, i) => (
                    <CalcBtn key={i} $gray={b.gray} $span={b.span} $top={b.top}>
                      {b.t}
                      {b.badge && <Badge><Bolt /></Badge>}
                      {b.sel && (
                        <Selection>
                          <Marker />
                          {handles.map(([x, y]) => <Handle key={`${x}-${y}`} $x={x} $y={y} />)}
                        </Selection>
                      )}
                    </CalcBtn>
                  ))}
                </BtnGrid>
              </Calc>
              <VScroll />
              <HScroll />
            </Surface>
          </CanvasBody>
        </Center>
        <SidePanel $right>
          <TabBar $gap={35}><Tab>STYLE</Tab><Tab $on>INTERACTIONS</Tab><Tab>NOTES</Tab></TabBar>
          <NameField>(Rectangle Name)</NameField>
          <SecHead>SHAPE INTERACTIONS<TargetIcon /></SecHead>
          <PrimaryBtn>New Interaction</PrimaryBtn>
          <CommonHead>COMMON INTERACTIONS</CommonHead>
          <OutlineBtn>Click or Tap → Open Link</OutlineBtn>
          <OutlineBtn>Click or Tap → Set Visibility</OutlineBtn>
          <RightSection>
            <SecHead>SHAPE PROPERTIES<ShowAll>Show All<Menu size={15} color="#666" /></ShowAll></SecHead>
            <SmallBold>Style Effects</SmallBold>
            <AddEffect><Plus size={13} strokeWidth={1} color="#666" /><span>Add a style effect like MouseOver</span></AddEffect>
          </RightSection>
        </SidePanel>
      </Main>
      <BottomRule />
      <Taskbar>
        <News>
          <LionIcon />
          <NewsBadge>1</NewsBadge>
          <NewsText>AVL - NFO<small>Game score</small></NewsText>
        </News>
        <TaskSlot><WinLogo /></TaskSlot>
        <SearchPill><Search size={17} color="#333" />Search</SearchPill>
        <TaskSlot><TaskView /></TaskSlot>
        <TaskSlot><CopilotI /></TaskSlot>
        <TaskSlot><TeamsI /></TaskSlot>
        <TaskSlot><EdgeI /></TaskSlot>
        <TaskSlot><StoreI /></TaskSlot>
        <TaskSlot><ExplorerI /><RunDot /></TaskSlot>
        <TaskSlot><HelpI /></TaskSlot>
        <TaskSlot $on>
          <svg width="22" height="24" viewBox="0 0 22 24"><rect width="22" height="24" rx="2" fill="#f4f4f4" /><g transform="translate(4 5)"><path d="M1 0 7 7 1 14" fill="none" stroke="#1c9ce0" strokeWidth="2.400" /><path d="M13.500 0 9 5" fill="none" stroke="#1fc39a" strokeWidth="2.400" /><path d="M9 9 13.500 14" fill="none" stroke="#e6218c" strokeWidth="2.400" /></g></svg>
          <RunDot $on />
        </TaskSlot>
        <TaskSlot><ChromeI /><RunDot /></TaskSlot>
        <Tray>
          <TraySlot $w={32}><Up size={15} /></TraySlot>
          <TraySlot $w={32}><CloudOff /></TraySlot>
          <TraySlot $w={46}><TrayText>ENG<br />INTL</TrayText></TraySlot>
          <TraySlot $w={28}><Wifi size={16} /></TraySlot>
          <TraySlot $w={20}><Volume2 size={16} /></TraySlot>
          <TraySlot $w={28}><BatteryI /></TraySlot>
          <TraySlot $w={50} $ml={11}><TrayText>12:34 PM<br />4/6/2025</TrayText></TraySlot>
        </Tray>
      </Taskbar>
    </Root>
  );
}
